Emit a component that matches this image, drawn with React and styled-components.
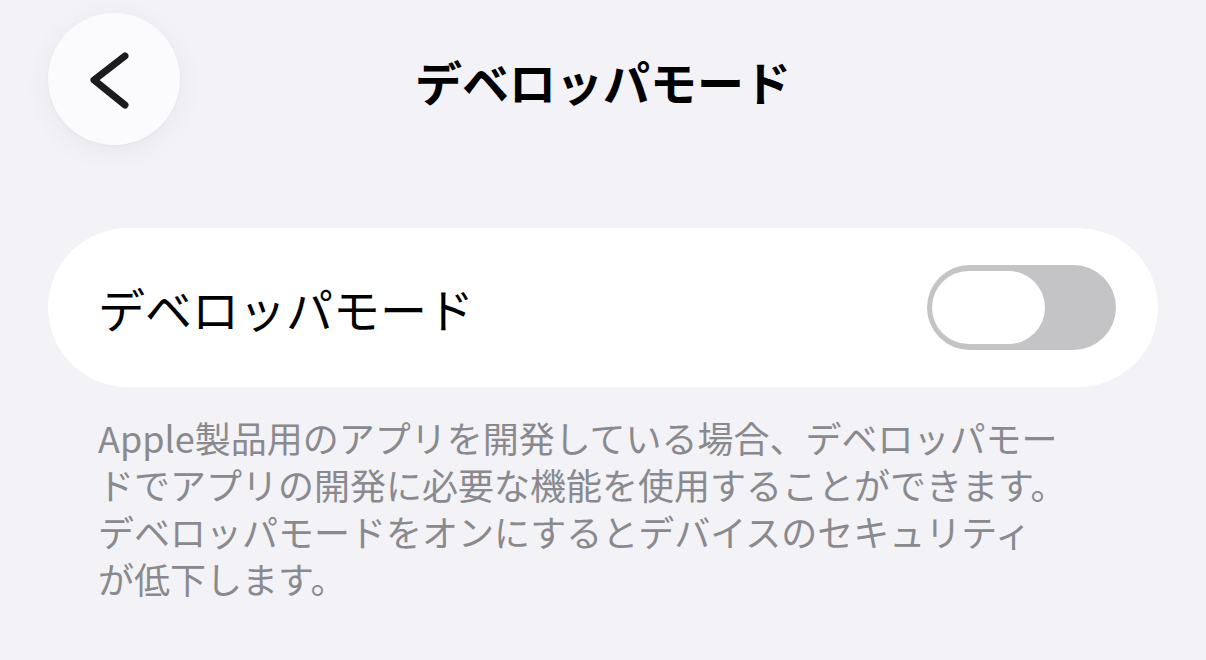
import styled, { createGlobalStyle } from "styled-components";

const GlobalStyle = createGlobalStyle`
  html, body {
    margin: 0;
    padding: 0;
    background: #f2f2f7;
  }
  body {
    font-family: "Noto Sans CJK JP", "Noto Sans", sans-serif;
    -webkit-font-smoothing: antialiased;
  }
`;

const Page = styled.div`
  width: 1206px;
  height: 660px;
  box-sizing: border-box;
  padding: 13px 48px 0;
  overflow: hidden;
`;

const Header = styled.header`
  display: grid;
  grid-template-columns: 132px 1fr 132px;
  align-items: center;
  height: 132px;
`;

const BackButton = styled.button`
  width: 132px;
  height: 132px;
  border-radius: 50%;
  border: none;
  background: #fbfbfd;
  box-shadow: 0 6px 28px rgba(0, 0, 0, 0.05), 0 1px 3px rgba(0, 0, 0, 0.03);
  display: flex;
  align-items: center;
  justify-content: center;
  padding: 0;
  cursor: pointer;
`;

const Title = styled.h1`
  margin: 0;
  text-align: center;
  font-size: 47px;
  font-weight: 700;
  color: #000;
  line-height: 1;
  padding-top: 2px;
`;

const Card = styled.section`
  margin-top: 83px;
  height: 159px;
  border-radius: 80px;
  background: #fff;
  display: flex;
  align-items: center;
  justify-content: space-between;
  padding: 0 42px 0 50px;
  box-sizing: border-box;
`;

const Label = styled.span`
  font-size: 47px;
  font-weight: 400;
  color: #000;
  line-height: 1;
`;

const Track = styled.div`
  width: 189px;
  height: 85px;
  border-radius: 43px;
  background: ${(p) => (p.on ? "#34c759" : "#c4c4c7")};
  display: flex;
  align-items: center;
  padding: 0 5px;
  box-sizing: border-box;
`;

const Knob = styled.div`
  width: 113px;
  height: 73px;
  border-radius: 37px;
  background: #fff;
`;

const Footnote = styled.p`
  margin: 27px 0 0 50px;
  font-size: 36px;
  line-height: 47px;
  color: #8a8a8e;
  white-space: nowrap;
`;

const App = () => {
  return (
    <>
      <GlobalStyle />
      <Page>
        <Header>
          <BackButton aria-label="戻る">
            <svg width="132" height="132" viewBox="0 0 132 132">
              <path
                d="M77 43 L46 67 L77 92"
                fill="none"
                stroke="#1c1c1e"
                strokeWidth="7"
                strokeLinecap="round"
                strokeLinejoin="round"
              />
            </svg>
          </BackButton>
          <Title>デベロッパモード</Title>
          <div />
        </Header>
        <Card>
          <Label>デベロッパモード</Label>
          <Track>
            <Knob />
          </Track>
        </Card>
        <Footnote>
          Apple製品用のアプリを開発している場合、デベロッパモー
          <br />
          ドでアプリの開発に必要な機能を使用することができます。
          <br />
          デベロッパモードをオンにするとデバイスのセキュリティ
          <br />
          が低下します。
        </Footnote>
      </Page>
    </>
  );
};

export default App;
